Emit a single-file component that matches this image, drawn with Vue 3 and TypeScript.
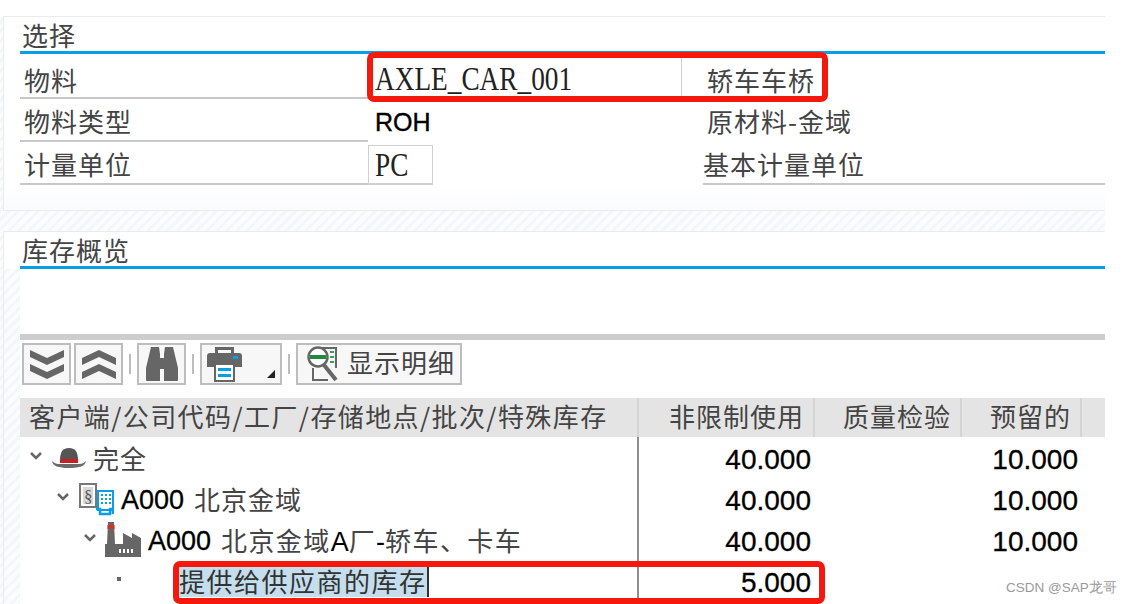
<script setup lang="ts">
interface Row { indent: number; icon: string; code?: string; text: string; free: string; res: string; sel?: boolean }
const rows: Row[] = [
  { indent: 29, icon: 'hat', text: '完全', free: '40.000', res: '10.000' },
  { indent: 56, icon: 'co', code: 'A000', text: '北京金域', free: '40.000', res: '10.000' },
  { indent: 83, icon: 'plant', code: 'A000', text: '北京金域', free: '40.000', res: '10.000' },
  { indent: 0, icon: 'dot', text: '提供给供应商的库存', free: '5.000', res: '', sel: true },
]
</script>

<template>
  <div class="page">
    <section class="panel first">
      <h2 class="title">选择</h2>
      <div class="field-row top">
        <span class="label">物料</span>
        <span class="input wide"><span class="narrow">AXLE_CAR_001</span></span>
        <span class="desc">轿车车桥</span>
      </div>
      <div class="field-row">
        <span class="label">物料类型</span>
        <span class="value">ROH</span>
        <span class="desc">原材料-金域</span>
      </div>
      <div class="field-row">
        <span class="label">计量单位</span>
        <span class="input small"><span class="narrow">PC</span></span>
        <span class="desc underlined">基本计量单位</span>
      </div>
    </section>

    <section class="panel second">
      <h2 class="title">库存概览</h2>
      <div class="content">
        <div class="sash"></div>
        <div class="toolbar">
          <button class="btn square">
            <svg width="38" height="34" viewBox="0 0 38 34"><path d="M2 3l17 8 17-8v7l-17 8-17-8zM2 17l17 8 17-8v7l-17 8-17-8z" fill="#666"/></svg>
          </button>
          <button class="btn square">
            <svg width="38" height="34" viewBox="0 0 38 34"><path d="M2 11l17-8 17 8v7l-17-8-17 8zM2 25l17-8 17 8v7l-17-8-17 8z" fill="#666"/></svg>
          </button>
          <i class="sep"></i>
          <button class="btn square">
            <svg width="32" height="34" viewBox="0 0 32 34"><path d="M5 0h8l1 7v27H1a1 1 0 0 1-1-1V21zM27 0h-8l-1 7v27h13a1 1 0 0 0 1-1V21z" fill="#666"/><rect x="13" y="11" width="6" height="11" fill="#666"/></svg>
          </button>
          <i class="sep"></i>
          <button class="btn print">
            <svg width="35" height="36" viewBox="0 0 35 36"><path d="M8 1h19v6h-3V4H11v3H8z" fill="#666"/><path d="M3 7h29a3 3 0 0 1 3 3v11h-7v-4H7v4H0V10a3 3 0 0 1 3-3z" fill="#666"/><rect x="26" y="10" width="5" height="3" fill="#0a9ee8"/><rect x="8" y="18" width="19" height="17" fill="#fff" stroke="#666" stroke-width="2"/><path d="M11 22h13v3H11zM11 28h13v3H11z" fill="#0a9ee8"/></svg>
            <span class="corner"></span>
          </button>
          <i class="sep"></i>
          <button class="btn detail">
            <svg width="32" height="36" viewBox="0 0 32 36"><path d="M11 2h18v20" fill="none" stroke="#666" stroke-width="2"/><path d="M6 22v12h15" fill="none" stroke="#666" stroke-width="2"/><circle cx="11" cy="11" r="9.500" fill="#fff" stroke="#666" stroke-width="2.500"/><rect x="3" y="9" width="16" height="4" fill="#1e8c3c"/><path d="M23 5h4v2h-4zM23 10h4v2h-4zM23 15h4v2h-4z" fill="#2fa84f"/><path d="M17 19l12 15" stroke="#666" stroke-width="4"/></svg>
            <span class="detail-text">显示明细</span>
          </button>
        </div>

        <div class="table-head">
          <div class="th tree">客户端/公司代码/工厂/存储地点/批次/特殊库存</div>
          <div class="th c1">非限制使用</div>
          <div class="th c2">质量检验</div>
          <div class="th c3">预留的</div>
        </div>

        <div v-for="(r, i) in rows" :key="i" class="tr">
          <div class="td tree">
            <template v-if="r.icon === 'dot'">
              <i class="dot"></i>
              <span class="selected">{{ r.text }}</span>
            </template>
            <template v-else>
              <span class="node" :style="{ marginLeft: r.indent - 20 + 'px' }">
                <svg class="caret" width="14" height="10" viewBox="0 0 14 10"><path d="M2 2l5 5 5-5" fill="none" stroke="#666" stroke-width="2.500"/></svg>
                <svg v-if="r.icon === 'hat'" width="36" height="24" viewBox="0 0 36 24"><path d="M9 15C9 5 12 2 18 2s9 3 9 13z" fill="#555"/><path d="M9 13h18v4H9z" fill="#c8211f"/><path d="M1 15c3 3 6 3 9 3h16c3 0 6 0 9-3-1 5-6 7-17 7S2 20 1 15z" fill="#6b6b6b"/></svg>
                <svg v-else-if="r.icon === 'co'" width="36" height="34" viewBox="0 0 36 34"><rect x="2" y="2" width="16" height="23" fill="#fff" stroke="#777" stroke-width="2"/><rect x="5" y="5" width="10" height="17" fill="#d8d8d8"/><text x="6" y="20" font-size="17" fill="#555" font-family="Liberation Serif">§</text><rect x="20" y="9" width="15" height="19" fill="#fff" stroke="#0a9ee8" stroke-width="2"/><path d="M23 12h2v2h-2zM27 12h2v2h-2zM31 12h2v2h-2zM23 16h2v2h-2zM27 16h2v2h-2zM31 16h2v2h-2zM23 20h2v2h-2zM27 20h2v2h-2zM31 20h2v2h-2z" fill="#0a9ee8"/><path d="M18 27h4v5h10v-5h3v5" fill="none" stroke="#0a9ee8" stroke-width="2.500"/></svg>
                <svg v-else width="36" height="36" viewBox="0 0 36 36"><path d="M3 0h6l1 22H2z" fill="#666"/><rect x="2.500" y="3" width="7" height="4" fill="#d0312d"/><path d="M18 22V11l9 5v-5l9 5v6z" fill="#666"/><path d="M0 22h36v13H0z" fill="#666"/><path d="M14 27h2v4h-2zM18 27h2v4h-2zM22 27h2v4h-2zM26 27h2v4h-2z" fill="#fff"/></svg>
                <span v-if="r.code" class="code">{{ r.code }}</span>
                <span class="node-text" :class="{ withcode: r.code, long: r.icon === 'plant' }">{{ r.text }}<template v-if="r.icon === 'plant'"><span class="latin">A</span>厂<span class="latin">-</span>轿车、卡车</template></span>
              </span>
            </template>
          </div>
          <div class="td num c1">{{ r.free }}</div>
          <div class="td num c2"></div>
          <div class="td num c3">{{ r.res }}</div>
        </div>
      </div>
    </section>

    <div class="mark mark-top"></div>
    <div class="mark mark-bottom"></div>
    <div class="watermark">CSDN @SAP龙哥</div>
  </div>
</template>

<style>
html, body { margin: 0; background: #fff; overflow: hidden; }
</style>

<style scoped>
.page {
  position: relative;
  width: 1105px;
  height: 604px;
  padding: 16px 0 0 3px;
  box-sizing: border-box;
  display: flex;
  flex-direction: column;
  gap: 20px;
  font-family: "Noto Sans CJK SC", "Liberation Sans", sans-serif;
  color: #333;
  background:
    linear-gradient(#fff, #fff) top / 100% 16px no-repeat,
    repeating-linear-gradient(135deg, #f3f7fa 0 3px, #fbfcfd 3px 7px);
}
.panel {
  border: 1px solid #ebebeb;
  border-right: 0;
  padding-left: 16px;
  background: repeating-linear-gradient(135deg, #f3f7fa 0 3px, #fbfcfd 3px 7px);
}
.first { height: 195px; flex: none; box-sizing: border-box; background: linear-gradient(#fff 170px, #fafbfc 194px); }
.second { flex: 1; min-height: 0; display: flex; flex-direction: column; overflow: hidden; border-bottom: 0; }
.title {
  margin: 0 0 0 -16px;
  height: 37px;
  flex: none;
  box-sizing: border-box;
  border-bottom: 3px solid #0a9ee8;
  border-image: linear-gradient(90deg, transparent 17px, #0a9ee8 17px) 1;
  background: #fff;
  padding-left: 18px;
  font-size: 26px;
  line-height: 35px;
  font-weight: 400;
  letter-spacing: 1px;
  color: #444;
}
.first .title { line-height: 36px; }
.field-row {
  display: flex;
  height: 43px;
  align-items: stretch;
  font-size: 26px;
}
.field-row.top { height: 45px; }
.label {
  width: 348px;
  box-sizing: border-box;
  padding-left: 4px;
  border-bottom: 2px solid #c8c8c8;
  letter-spacing: 1px;
  line-height: 44px;
  color: #444;
}
.top .label, .top .desc { line-height: 52px; }
.input {
  box-sizing: border-box;
  border: 1px solid #d0d0d0;
  border-bottom-width: 2px;
  background: #fff;
  padding-left: 6px;
  color: #222;
}
.narrow {
  display: inline-block;
  font-family: "Liberation Serif", serif;
  font-size: 33px;
  line-height: 48px;
  white-space: nowrap;
  transform: scaleX(0.827);
  transform-origin: left center;
}
.wide { width: 314px; }
.small { width: 65px; margin-top: 3px; }
.small .narrow { line-height: 39px; }
.value {
  width: 314px;
  padding-left: 7px;
  box-sizing: border-box;
  font-family: "Liberation Sans", sans-serif;
  font-size: 25px;
  -webkit-text-stroke: 0.4px #000;
  line-height: 46px;
  color: #000;
}
.desc { padding-left: 25px; letter-spacing: 1px; line-height: 44px; color: #444; }
.underlined {
  flex: 1;
  padding-left: 0;
  border-bottom: 2px solid #c8c8c8;
  margin-left: 270px;
}
.content { flex: 1; min-height: 0; overflow: hidden; background: #fff; padding-top: 65px; box-sizing: border-box; }
.sash { height: 6px; background: #cdcdcd; }
.toolbar { display: flex; align-items: center; height: 47px; padding-left: 2px; padding-top: 1px; box-sizing: border-box; gap: 3px; }
.btn {
  height: 42px;
  box-sizing: border-box;
  border: 2px solid #bdbdbd;
  background: #f7f7f7;
  padding: 0;
  display: flex;
  align-items: center;
  justify-content: center;
  position: relative;
  font: inherit;
}
.square { width: 49px; }
.print { width: 82px; justify-content: flex-start; padding-left: 5px; }
.corner { position: absolute; right: 5px; bottom: 5px; border: 4.500px solid transparent; border-right-color: #222; border-bottom-color: #222; }
.detail { width: 166px; justify-content: flex-start; padding-left: 9px; gap: 8px; font-size: 26px; letter-spacing: 1px; color: #444; }
.detail-text { line-height: 30px; margin-top: -5px; }
.sep { width: 2px; height: 20px; background: #bdbdbd; margin: 0 3px; }
.table-head { display: flex; height: 39px; margin-top: 11px; background: #e4e4e4; font-size: 26px; color: #444; }
.th { box-sizing: border-box; line-height: 36px; border-right: 2px solid #d4d4d4; letter-spacing: 1px; white-space: nowrap; text-align: right; padding-right: 9px; }
.th.tree { text-align: left; padding-left: 9px; padding-right: 0; letter-spacing: 1.400px; }
.tree { width: 619px; }
.c1 { width: 176px; }
.c2 { width: 147px; }
.c3 { width: 120px; }
.tr { display: flex; height: 41px; }
.td { box-sizing: border-box; }
.td.tree { border-right: 2px solid #8f8f8f; display: flex; align-items: center; white-space: nowrap; font-size: 26px; position: relative; }
.node { display: flex; align-items: center; }
.caret { margin-right: 8px; margin-top: -4px; }
.node-text { margin-left: 6px; letter-spacing: 1px; color: #444; margin-top: -1px; }
.node-text.withcode { margin-left: 10px; }
.node-text.long { letter-spacing: 1.400px; }
.code, .latin { font-family: "Liberation Sans", sans-serif; font-size: 27px; color: #000; }
.code { margin-left: 7px; margin-top: 4px; -webkit-text-stroke: 0.3px #000; }
.latin { letter-spacing: 0; }
.num { font-family: "Liberation Sans", sans-serif; font-size: 28px; -webkit-text-stroke: 0.3px #000; color: #000; text-align: right; padding-right: 4px; line-height: 45px; }
.dot { position: absolute; left: 97px; top: 17px; width: 4px; height: 4px; background: #666; }
.selected { margin-left: 159px; background: #c4deed; border-right: 2px solid #333; letter-spacing: 1.500px; line-height: 33px; color: #333; }
.mark { position: absolute; border: 6px solid #f5190d; border-radius: 7px; box-sizing: border-box; pointer-events: none; }
.mark-top { left: 367px; top: 52px; width: 461px; height: 50px; }
.mark-bottom { left: 173px; top: 561px; width: 652px; height: 43px; }
.watermark { position: absolute; left: 1006px; top: 579px; font-family: "Liberation Sans", sans-serif; font-size: 13.500px; color: #999; white-space: nowrap; }
</style>
